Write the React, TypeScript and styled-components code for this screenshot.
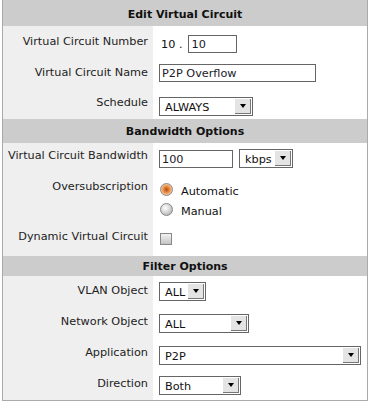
import styled, { createGlobalStyle } from "styled-components";

const GlobalStyle = createGlobalStyle`
  body {
    margin: 0;
    background: #fff;
    font-family: "DejaVu Sans", Verdana, sans-serif;
    font-size: 11.25px;
    color: #222;
  }
`;

const Panel = styled.div`
  margin-left: 2px;
  width: 364px;
  border: 1px solid #aaa;
  border-top: none;
  background: #fff;
`;

const SectionHeader = styled.div<{ $h: number; $top?: number }>`
  background: #cccccc;
  height: ${(p) => p.$h}px;
  box-sizing: border-box;
  padding-top: ${(p) => p.$top ?? 0}px;
  display: flex;
  align-items: center;
  justify-content: center;
  font-weight: bold;
  font-size: 11px;
  color: #111;
`;

// $lt / $vt: top padding of the label and of the value cell
const Row = styled.div<{ $h: number; $lt: number; $vt: number }>`
  display: grid;
  grid-template-columns: 150px 1fr;
  height: ${(p) => p.$h}px;

  & > .label {
    padding-top: ${(p) => p.$lt}px;
  }
  & > .value {
    padding-top: ${(p) => p.$vt}px;
  }
`;

const Label = styled.div`
  background: #efefef;
  text-align: right;
  padding-right: 5px;
  line-height: 13px;
  white-space: nowrap;
`;

const Value = styled.div`
  padding-left: 6px;
  display: flex;
  flex-direction: column;
  gap: 7px;
`;

const Inline = styled.div`
  display: flex;
  align-items: center;
  gap: 6px;
`;

const Prefix = styled.span`
  padding-left: 2px;
  color: #111;
`;

const TextBox = styled.div<{ $w: number }>`
  width: ${(p) => p.$w}px;
  height: 18px;
  box-sizing: border-box;
  border: 1px solid #666;
  background: #fff;
  padding: 2px 2px;
  line-height: 13px;
  color: #1a1a2a;
`;

const SelectBox = styled.div<{ $w: number }>`
  width: ${(p) => p.$w}px;
  height: 19px;
  box-sizing: border-box;
  border: 1px solid #666;
  background: #fff;
  display: flex;
  align-items: stretch;
  color: #111;
`;

const SelectText = styled.span`
  flex: 1;
  padding: 3px 0 0 5px;
  line-height: 13px;
  white-space: nowrap;
  overflow: hidden;
`;

const Arrow = styled.span`
  width: 15px;
  margin: 1px;
  background: #e4e4e4;
  border-right: 1px solid #777;
  border-bottom: 1px solid #777;
  display: flex;
  align-items: center;
  justify-content: center;
  &::after {
    content: "";
    border-left: 3px solid transparent;
    border-right: 3px solid transparent;
    border-top: 4px solid #000;
  }
`;

const Option = styled.label`
  display: flex;
  align-items: center;
  gap: 8px;
  height: 13px;
  padding-left: 1px;
  color: #111;

  & > span:last-child {
    padding-top: 3px;
  }
`;

const Radio = styled.span<{ $on?: boolean }>`
  flex: none;
  width: 13px;
  height: 13px;
  border-radius: 50%;
  box-sizing: border-box;
  border: 1px solid #888;
  background: ${(p) =>
    p.$on
      ? "radial-gradient(circle at 50% 50%, #a8501a 0, #d8742e 2px, #f0a060 4px, #f6d0b0 6px)"
      : "radial-gradient(circle at 40% 35%, #fff 0, #e6e6e6 3px, #bcbcbc 7px)"};
`;

const Check = styled.span`
  display: block;
  width: 12px;
  height: 12px;
  box-sizing: border-box;
  border: 1px solid #888;
  background: linear-gradient(#f2f2f2, #c4c4c4);
  margin-left: 1px;
`;

const Select = ({ w, text }: { w: number; text: string }) => (
  <SelectBox $w={w}>
    <SelectText>{text}</SelectText>
    <Arrow />
  </SelectBox>
);

const App = () => (
  <>
    <GlobalStyle />
    <Panel>
      <SectionHeader $h={26} $top={3}>
        Edit Virtual Circuit
      </SectionHeader>
      <Row $h={31} $lt={9} $vt={9}>
        <Label className="label">Virtual Circuit Number</Label>
        <Value className="value">
          <Inline>
            <Prefix>10 .</Prefix>
            <TextBox $w={49}>10</TextBox>
          </Inline>
        </Value>
      </Row>
      <Row $h={31} $lt={9} $vt={7}>
        <Label className="label">Virtual Circuit Name</Label>
        <Value className="value">
          <TextBox $w={157}>P2P Overflow</TextBox>
        </Value>
      </Row>
      <Row $h={31} $lt={8} $vt={9}>
        <Label className="label">Schedule</Label>
        <Value className="value">
          <Select w={94} text="ALWAYS" />
        </Value>
      </Row>

      <SectionHeader $h={24}>Bandwidth Options</SectionHeader>
      <Row $h={31} $lt={6} $vt={6}>
        <Label className="label">Virtual Circuit Bandwidth</Label>
        <Value className="value">
          <Inline>
            <TextBox $w={74}>100</TextBox>
            <Select w={54} text="kbps" />
          </Inline>
        </Value>
      </Row>
      <Row $h={50} $lt={6} $vt={9}>
        <Label className="label">Oversubscription</Label>
        <Value className="value">
          <Option>
            <Radio $on />
            <span>Automatic</span>
          </Option>
          <Option>
            <Radio />
            <span>Manual</span>
          </Option>
        </Value>
      </Row>
      <Row $h={32} $lt={6} $vt={9}>
        <Label className="label">Dynamic Virtual Circuit</Label>
        <Value className="value">
          <Check />
        </Value>
      </Row>

      <SectionHeader $h={20}>Filter Options</SectionHeader>
      <Row $h={31} $lt={8} $vt={6}>
        <Label className="label">VLAN Object</Label>
        <Value className="value">
          <Select w={47} text="ALL" />
        </Value>
      </Row>
      <Row $h={31} $lt={8} $vt={7}>
        <Label className="label">Network Object</Label>
        <Value className="value">
          <Select w={90} text="ALL" />
        </Value>
      </Row>
      <Row $h={31} $lt={8} $vt={8}>
        <Label className="label">Application</Label>
        <Value className="value">
          <Select w={202} text="P2P" />
        </Value>
      </Row>
      <Row $h={31} $lt={8} $vt={7}>
        <Label className="label">Direction</Label>
        <Value className="value">
          <Select w={82} text="Both" />
        </Value>
      </Row>
    </Panel>
  </>
);

export default App;
